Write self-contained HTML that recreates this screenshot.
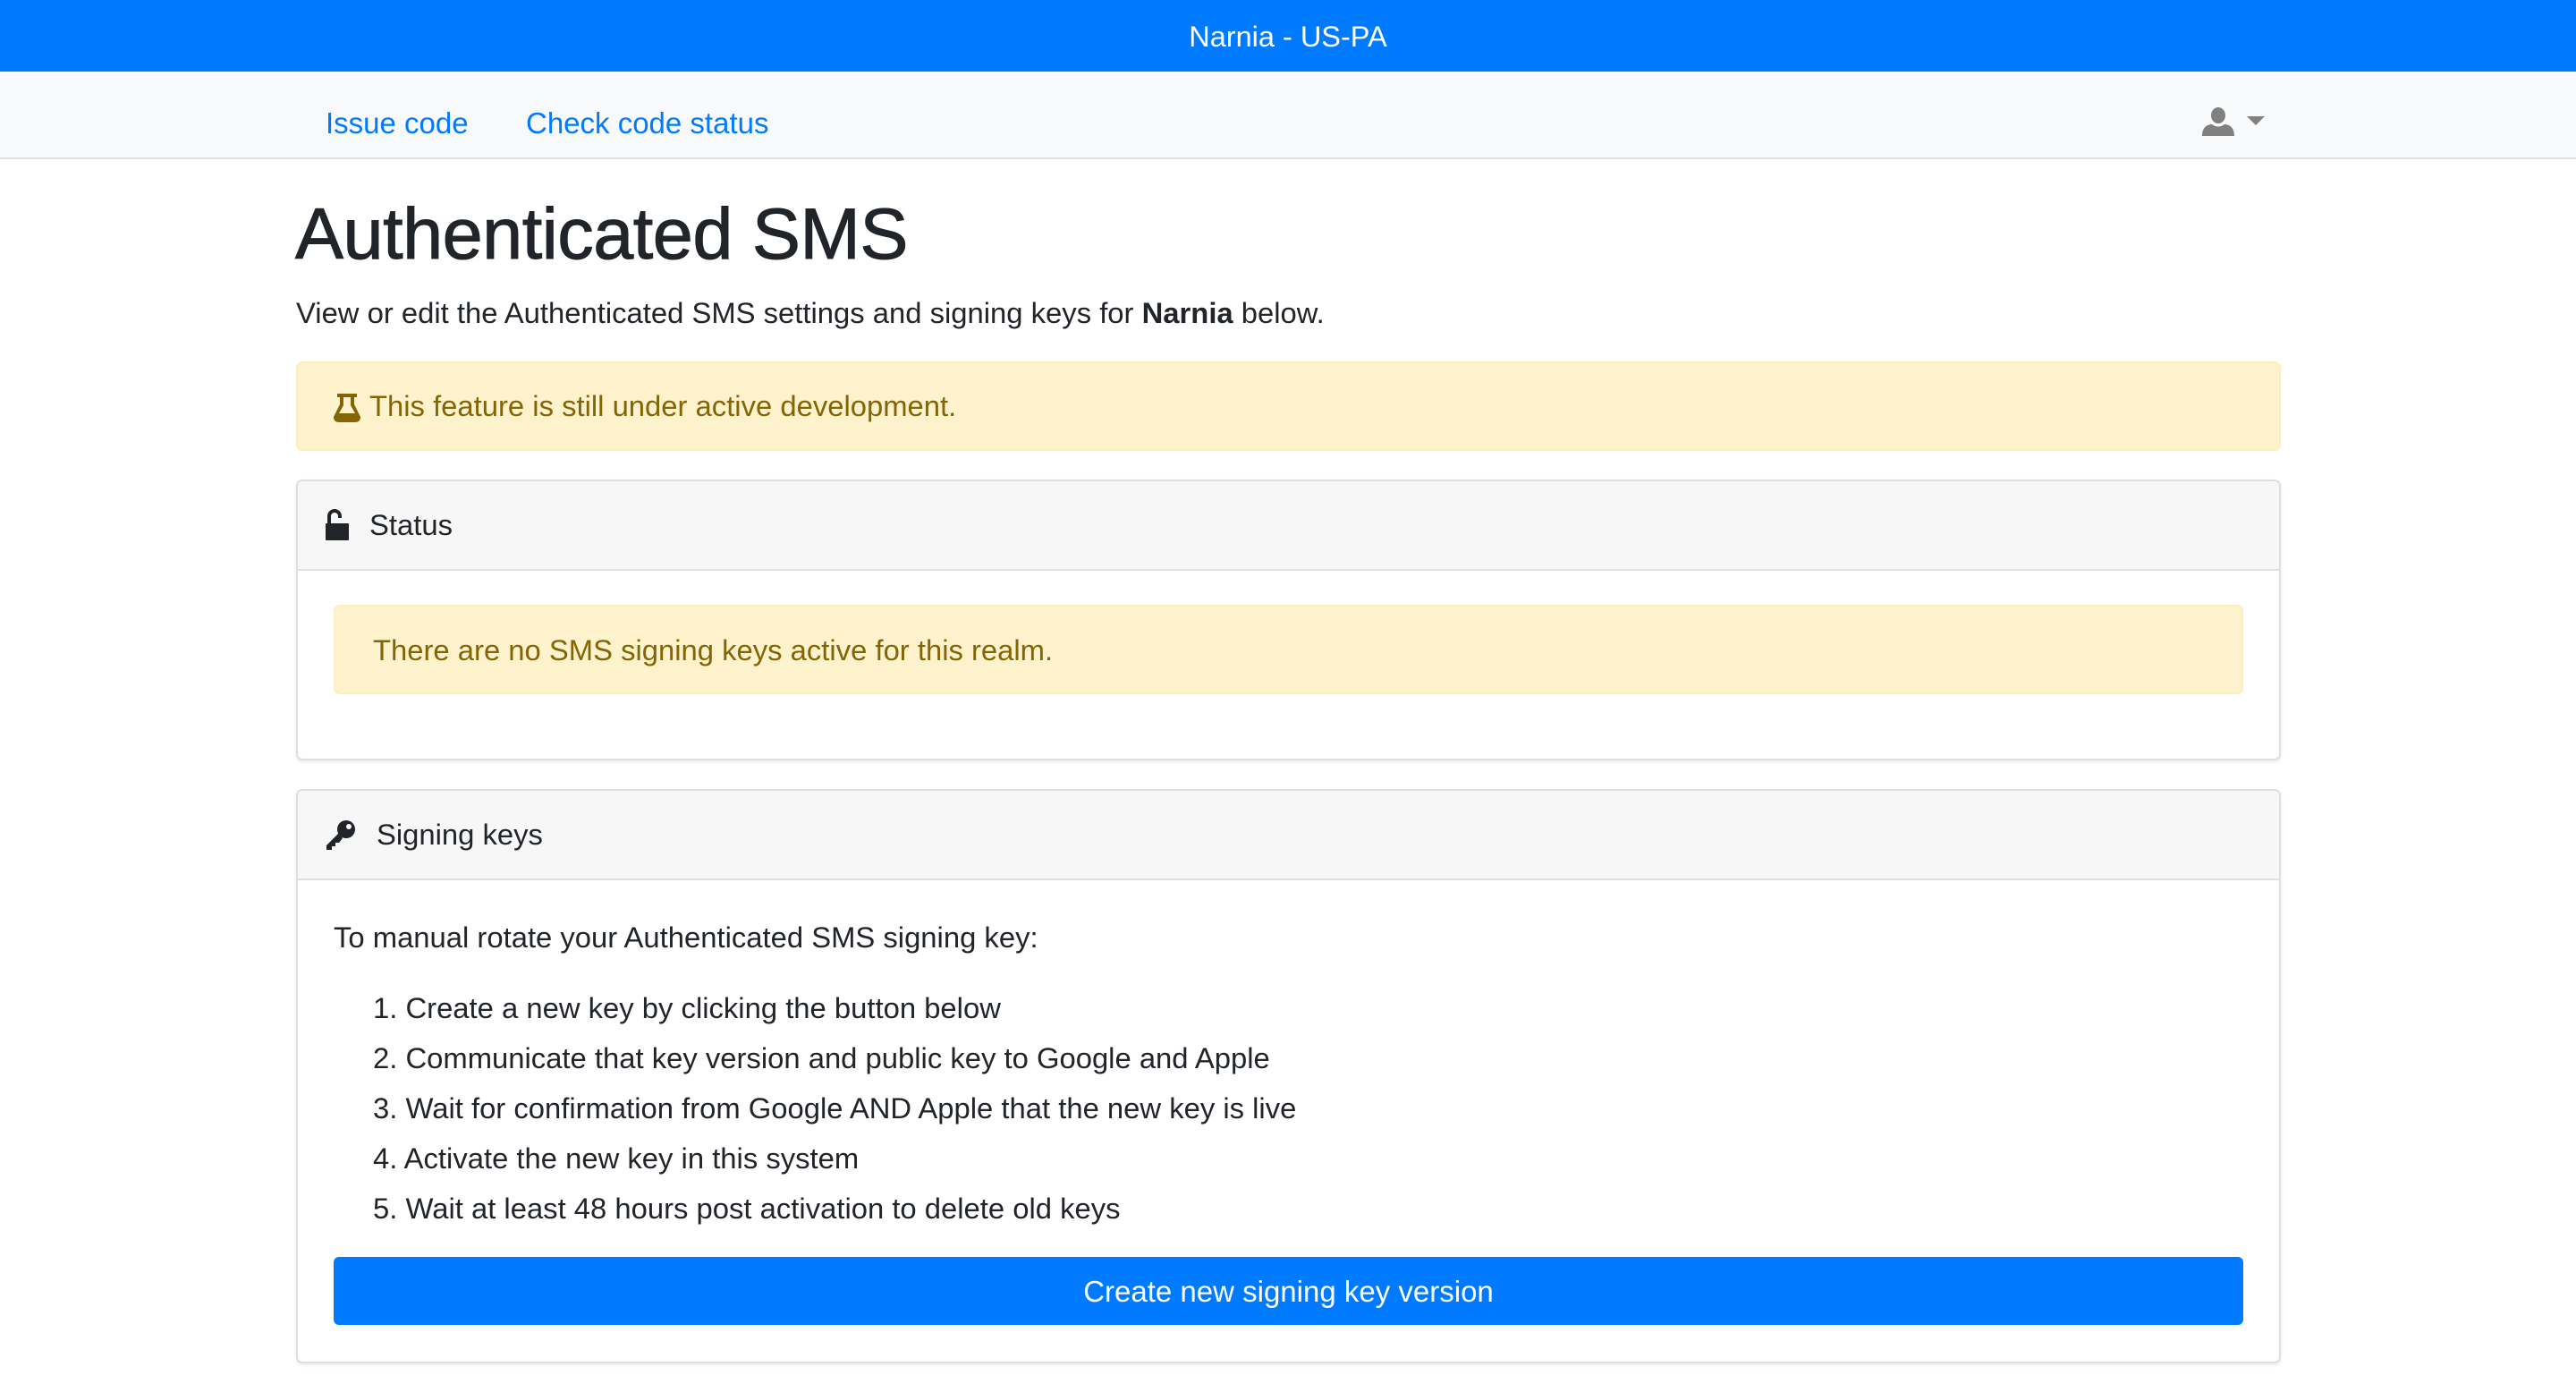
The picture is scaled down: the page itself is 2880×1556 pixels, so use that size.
<!DOCTYPE html>
<html><head><meta charset="utf-8"><style>
*{box-sizing:border-box;margin:0;padding:0}
body{width:2880px;height:1556px;background:#fff;font-family:"Liberation Sans",sans-serif;color:#212529;position:relative;overflow:hidden;font-size:32.8px}
.abs{position:absolute}
.top{left:0;top:0;width:2880px;height:80px;background:#007bff;color:#fff;text-align:center;line-height:82px;font-size:32.5px}
.nav{left:0;top:80px;width:2880px;height:98px;background:#f8f9fa;border-bottom:2px solid #dee2e6}
.nav a{position:absolute;top:10px;line-height:96px;color:#007bff;text-decoration:none;font-size:33px}
h1{position:absolute;left:330px;top:212px;font-size:81px;font-weight:normal;line-height:100px;letter-spacing:-0.5px;-webkit-text-stroke:1px #212529}
.lead{left:331px;top:330px;line-height:40px}
.alert{background:#fff3cd;border:2px solid #ffeeba;border-radius:7px;color:#856404}
.card{left:331px;width:2219px;border:2px solid #dfdfdf;border-radius:7px;box-shadow:0 2px 4px rgba(0,0,0,.08);background:#fff;overflow:hidden}
.ch{position:absolute;left:0;top:0;width:100%;height:100px;background:#f7f7f7;border-bottom:2px solid #dfdfdf}
.ch span{position:absolute;top:0;line-height:98px}
ol li{position:absolute;left:86px;list-style:none;line-height:40px}
.btn{background:#007bff;color:#fff;border-radius:6px;text-align:center;line-height:78px;font-size:33px}
</style></head><body>
<div class="abs top">Narnia - US-PA</div>
<div class="abs nav">
<a style="left:364px">Issue code</a>
<a style="left:588px">Check code status</a>
<svg class="abs" style="left:2462px;top:40px" width="36" height="32" viewBox="0 0 36 32"><ellipse cx="18" cy="9" rx="8" ry="9" fill="#808080"/><path d="M0 32 C0 22 6 19 11 19 Q18 24 25 19 C30 19 36 22 36 32Z" fill="#808080"/></svg>
<svg class="abs" style="left:2512px;top:50px" width="20" height="10"><path d="M0 0H20L10 10Z" fill="#808080"/></svg>
</div>
<h1>Authenticated SMS</h1>
<div class="abs lead">View or edit the Authenticated SMS settings and signing keys for <b>Narnia</b> below.</div>
<div class="abs alert" style="left:331px;top:404px;width:2219px;height:100px">
<svg class="abs" style="left:40px;top:34px" width="30" height="32" viewBox="0 0 30 32"><path d="M4 0H26V4H23V12L30 26Q30 32 24 32H6Q0 32 0 26L7 12V4H4Z" fill="#856404"/><path d="M11 4H19V13L24 22H6L11 13Z" fill="#fff3cd"/></svg>
<span class="abs" style="left:80px;top:0;line-height:96px">This feature is still under active development.</span>
</div>
<div class="abs card" style="top:536px;height:314px">
<div class="ch">
<svg class="abs" style="left:31px;top:30px" width="26" height="36" viewBox="0 0 26 36"><path d="M4 17V9A6 6 0 0 1 16 9V11" fill="none" stroke="#212529" stroke-width="4"/><rect x="0" y="17" width="26" height="19" rx="1" fill="#212529"/></svg>
<span style="left:80px">Status</span></div>
<div class="abs alert" style="left:40px;top:138px;width:2135px;height:100px"><span class="abs" style="left:42px;line-height:98px">There are no SMS signing keys active for this realm.</span></div>
</div>
<div class="abs card" style="top:882px;height:642px">
<div class="ch">
<svg class="abs" style="left:31px;top:32px" width="34" height="34" viewBox="0 0 34 34"><circle cx="23" cy="11" r="10" fill="#212529"/><circle cx="26" cy="8" r="3" fill="#f7f7f7"/><path d="M15 15L1 29V34H7V30H11V26H15L19 21Z" fill="#212529"/></svg>
<span style="left:88px">Signing keys</span></div>
<div class="abs" style="left:40px;top:144px;line-height:40px">To manual rotate your Authenticated SMS signing key:</div>
<ol>
<li style="top:223px;left:84px">1. Create a new key by clicking the button below</li>
<li style="top:279px;left:84px">2. Communicate that key version and public key to Google and Apple</li>
<li style="top:335px;left:84px">3. Wait for confirmation from Google AND Apple that the new key is live</li>
<li style="top:391px;left:84px">4. Activate the new key in this system</li>
<li style="top:447px;left:84px">5. Wait at least 48 hours post activation to delete old keys</li>
</ol>
<div class="abs btn" style="left:40px;top:521px;width:2135px;height:76px">Create new signing key version</div>
</div>
</body></html>
